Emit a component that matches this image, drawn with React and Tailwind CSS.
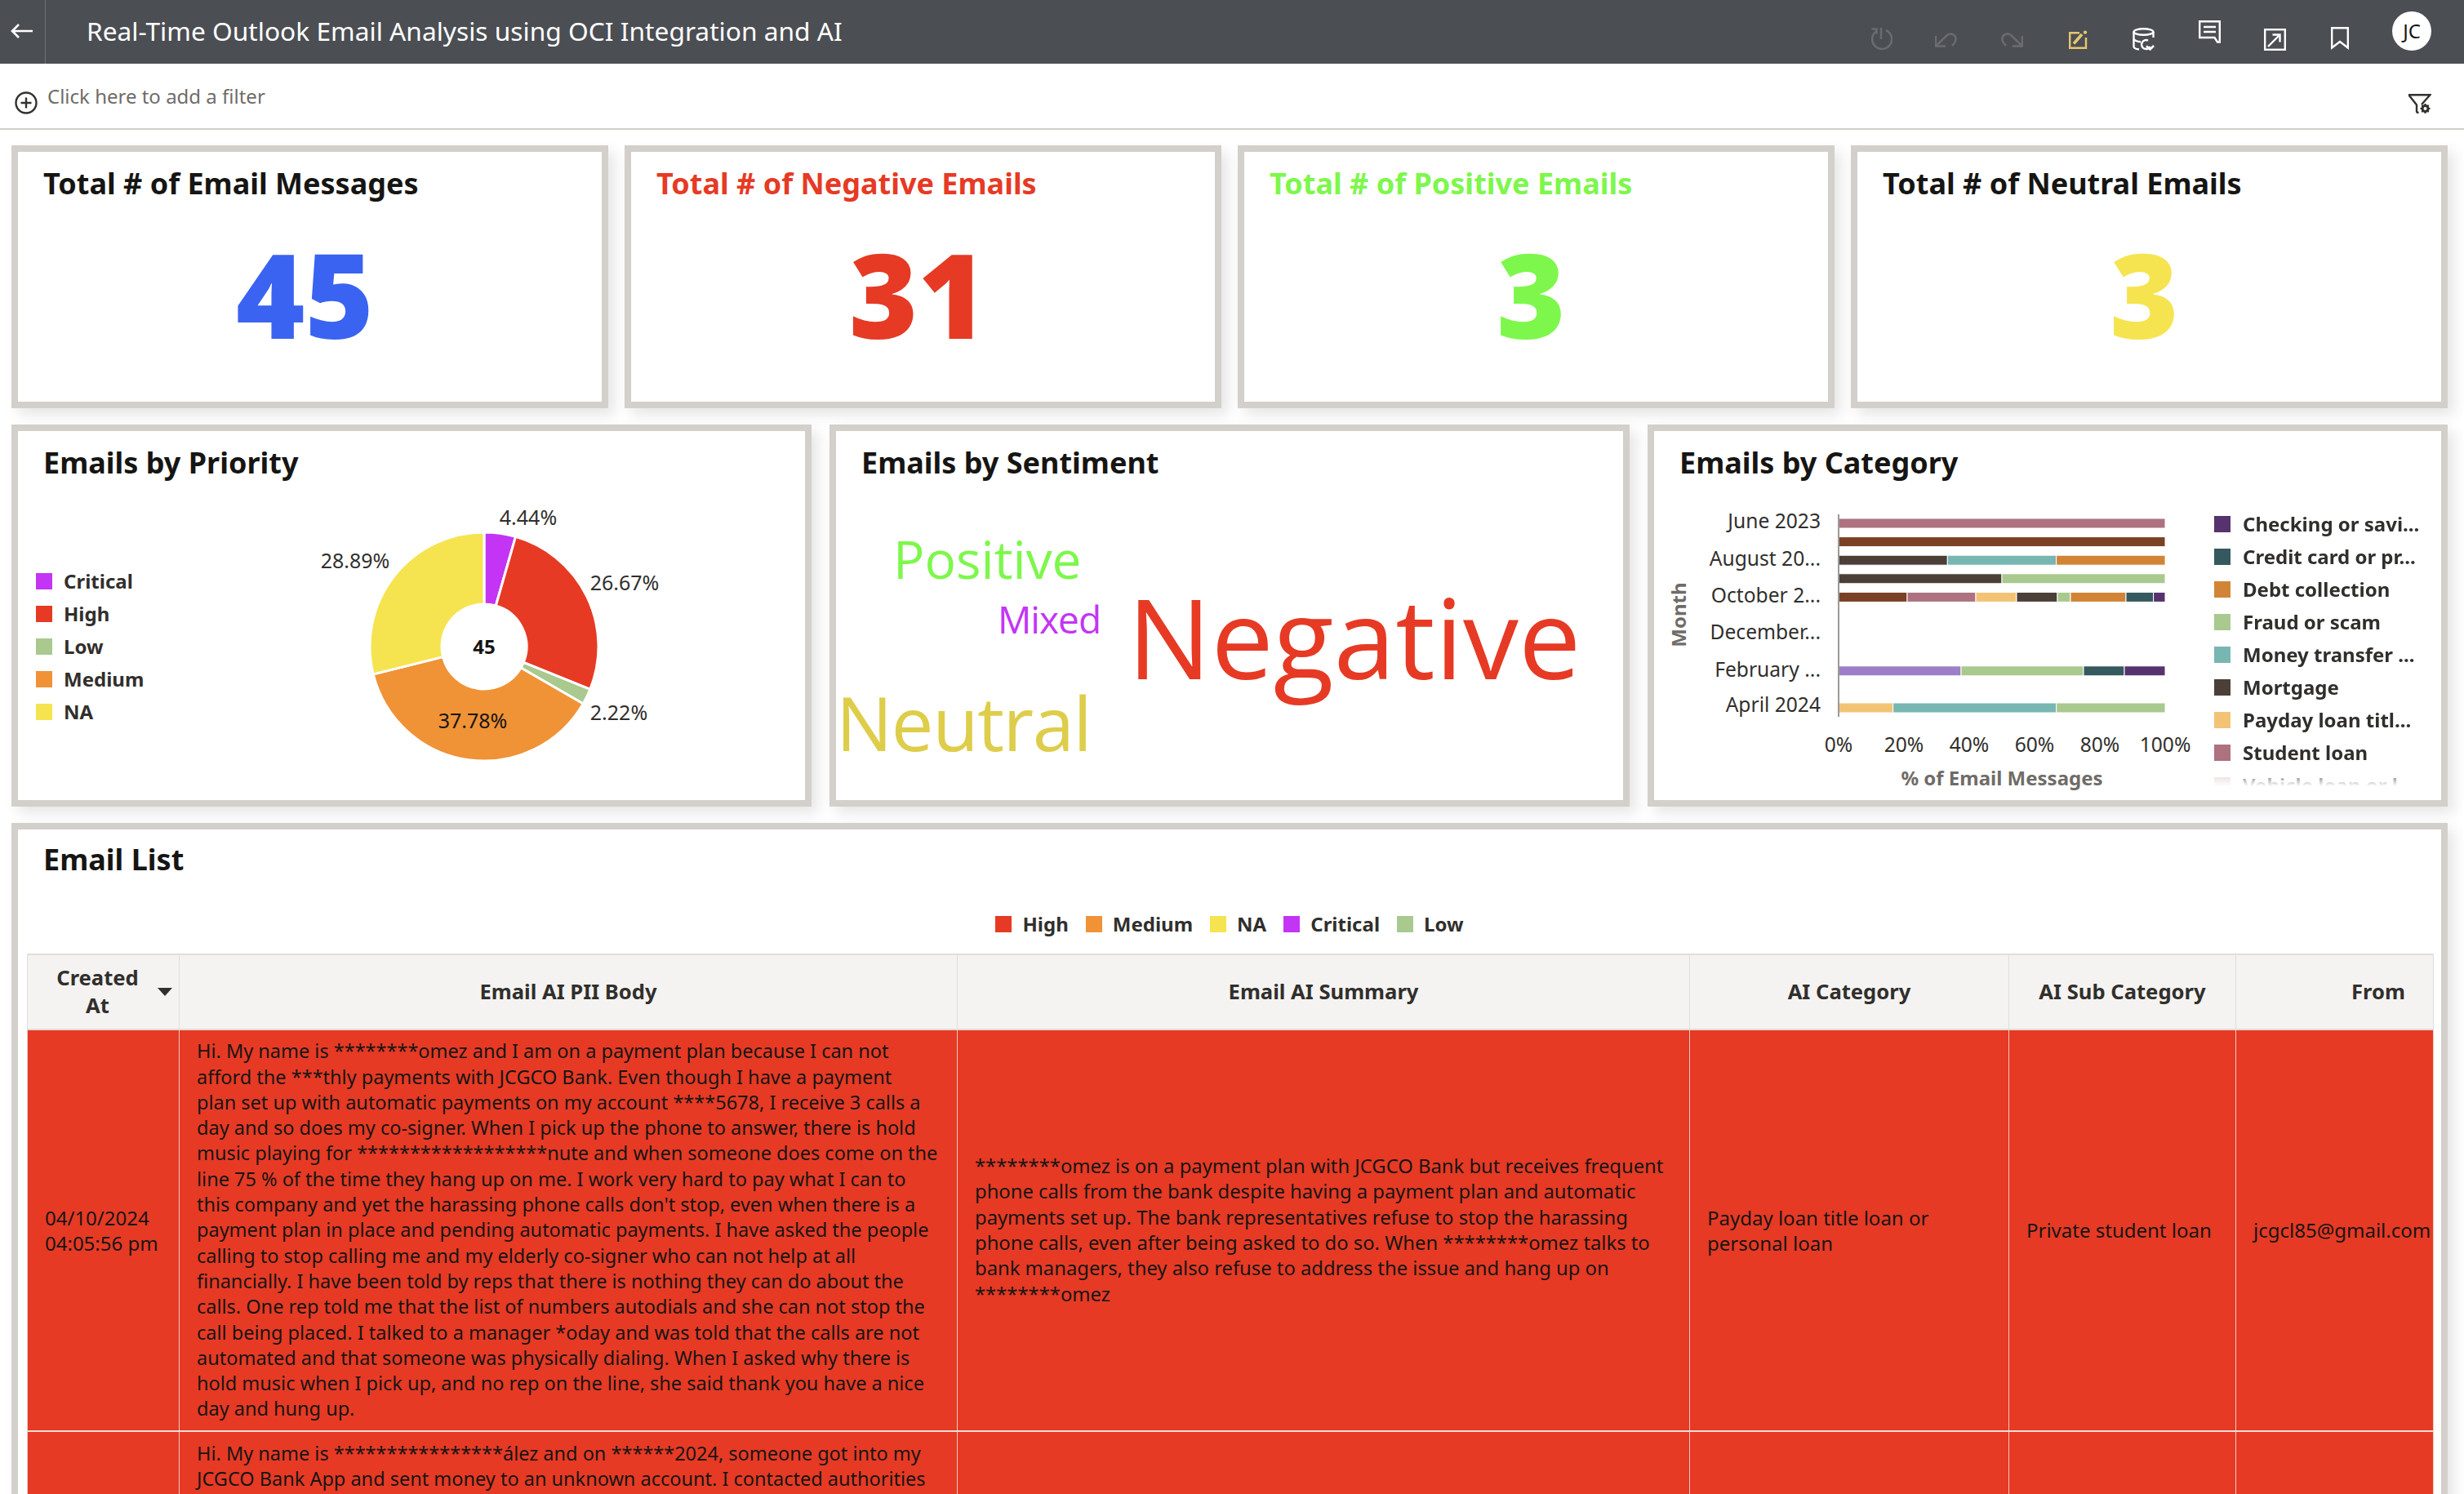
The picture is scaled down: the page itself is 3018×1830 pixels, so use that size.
import React from 'react';

const bodyLines = [
    "Hi. My name is ********omez and I am on a payment plan because I can not",
    "afford the ***thly payments with JCGCO Bank. Even though I have a payment",
    "plan set up with automatic payments on my account ****5678, I receive 3 calls a",
    "day and so does my co-signer. When I pick up the phone to answer, there is hold",
    "music playing for ******************nute and when someone does come on the",
    "line 75 % of the time they hang up on me. I work very hard to pay what I can to",
    "this company and yet the harassing phone calls don't stop, even when there is a",
    "payment plan in place and pending automatic payments. I have asked the people",
    "calling to stop calling me and my elderly co-signer who can not help at all",
    "financially. I have been told by reps that there is nothing they can do about the",
    "calls. One rep told me that the list of numbers autodials and she can not stop the",
    "call being placed. I talked to a manager *oday and was told that the calls are not",
    "automated and that someone was physically dialing. When I asked why there is",
    "hold music when I pick up, and no rep on the line, she said thank you have a nice",
    "day and hung up.",
];

const summaryLines = [
    "********omez is on a payment plan with JCGCO Bank but receives frequent",
    "phone calls from the bank despite having a payment plan and automatic",
    "payments set up. The bank representatives refuse to stop the harassing",
    "phone calls, even after being asked to do so. When ********omez talks to",
    "bank managers, they also refuse to address the issue and hang up on",
    "********omez",
];

const body2Lines = [
    "Hi. My name is ****************ález and on ******2024, someone got into my",
    "JCGCO Bank App and sent money to an unknown account. I contacted authorities",
];

const C = {
    checking: '#56336e', credit: '#35595f', debt: '#d18435', fraud: '#a9c98f', money: '#78b6b2',
    mortgage: '#4b3f37', payday: '#f3c375', student: '#ad7180', brown: '#7a4125', purple: '#9c7fc7',
};

// [row index, [[color, percent]...]]
const bars = [
    [0, [[C.student, 100]]],
    [1, [[C.brown, 100]]],
    [2, [[C.mortgage, 33.33], [C.money, 33.33], [C.debt, 33.34]]],
    [3, [[C.mortgage, 50], [C.fraud, 50]]],
    [4, [[C.brown, 21], [C.student, 21], [C.payday, 12.5], [C.mortgage, 12.5], [C.fraud, 4], [C.debt, 17], [C.credit, 8.4], [C.checking, 3.6]]],
    [8, [[C.purple, 37.5], [C.fraud, 37.5], [C.credit, 12.5], [C.checking, 12.5]]],
    [10, [[C.payday, 16.67], [C.money, 50], [C.fraud, 33.33]]],
];

const categoryLegend = [
    [C.checking, 'Checking or savi...'],
    [C.credit, 'Credit card or pr...'],
    [C.debt, 'Debt collection'],
    [C.fraud, 'Fraud or scam'],
    [C.money, 'Money transfer ...'],
    [C.mortgage, 'Mortgage'],
    [C.payday, 'Payday loan titl...'],
    [C.student, 'Student loan'],
    ['#d9c8c4', 'Vehicle loan or l'],
];

const priorityLegend = [
    ['#c334f5', 'Critical'],
    ['#e63a25', 'High'],
    ['#a9c98f', 'Low'],
    ['#f09236', 'Medium'],
    ['#f5e44f', 'NA'],
];

const slices = [
    ['#c334f5', 4.44],
    ['#e63a25', 26.67],
    ['#a9c98f', 2.22],
    ['#f09236', 37.78],
    ['#f5e44f', 28.89],
];

const slicePath = (cx, cy, r, r2, from, to) => {
    const a = (from / 100) * Math.PI * 2;
    const b = (to / 100) * Math.PI * 2;
    const pt = (rad, ang) => `${cx + rad * Math.sin(ang)} ${cy - rad * Math.cos(ang)}`;
    const large = to - from > 50 ? 1 : 0;
    return `M${pt(r2, a)} L${pt(r, a)} A${r} ${r} 0 ${large} 1 ${pt(r, b)} L${pt(r2, b)} A${r2} ${r2} 0 ${large} 0 ${pt(r2, a)}Z`;
};

const PowerIcon = () => (
    <svg width="28" height="28" viewBox="0 0 28 28" fill="none" stroke="#6a6c70" strokeWidth="2.5" className="mt-[33px]">
        <path d="M8.5 5 A12 12 0 1 0 20 4" />
        <path d="M14 1 V15" />
        <path d="M2.5 2.5 H8.5 V8.5" />
    </svg>
);

const UndoIcon = () => (
    <svg width="27" height="18" viewBox="0 0 27 18" fill="none" stroke="#6a6c70" strokeWidth="2.5" className="mt-[40px] ml-[52px]">
        <path d="M1 4 V16.5 H13" />
        <path d="M1.5 16 L15 3 C19 0 25 2 25.5 7 C26 10 23 14 21 16" />
    </svg>
);

const RedoIcon = () => (
    <svg width="27" height="18" viewBox="0 0 27 18" fill="none" stroke="#6a6c70" strokeWidth="2.5" className="mt-[40px] ml-[54px]">
        <path d="M26 4 V16.5 H14" />
        <path d="M25.5 16 L12 3 C8 0 2 2 1.5 7 C1 10 4 14 6 16" />
    </svg>
);

const EditIcon = () => (
    <svg width="23" height="23" viewBox="0 0 23 23" fill="none" stroke="#e5c56e" className="mt-[37px] ml-[56px]">
        <path d="M13 3.2 H1.2 V21.8 H21 V9" strokeWidth="2.4" />
        <path d="M6 16.5 L16 5" strokeWidth="3.6" />
        <circle cx="20" cy="2.6" r="2.2" fill="#e5c56e" stroke="none" />
    </svg>
);

const DataIcon = () => (
    <svg width="28" height="28" viewBox="0 0 28 28" fill="none" stroke="#ffffff" strokeWidth="2.4" className="mt-[34px] ml-[55px]">
        <ellipse cx="13.5" cy="5" rx="12" ry="3.8" />
        <path d="M1.5 5 V23 C1.5 25 4 26 8 26.5" />
        <path d="M25.5 5 V12" />
        <path d="M1.5 14 C3 16 6 17 10 17.2" />
        <path d="M21.5 23 A5.5 5.5 0 1 1 19 15.6" />
        <path d="M17 22.5 L21.5 26.5 L26 22" strokeWidth="2.6" />
    </svg>
);

const CommentIcon = () => (
    <svg width="27" height="28" viewBox="0 0 27 28" fill="none" stroke="#ffffff" strokeWidth="2.4" className="mt-[25px] ml-[53px]">
        <path d="M1.2 1.2 H25.8 V26.5 H23 L19.5 21 H1.2 Z" />
        <path d="M6 8 H21 M6 14 H21" />
    </svg>
);

const ShareIcon = () => (
    <svg width="27" height="27" viewBox="0 0 27 27" fill="none" stroke="#ffffff" strokeWidth="2.4" className="mt-[35px] ml-[53px]">
        <rect x="1.2" y="1.2" width="24.6" height="24.6" />
        <path d="M5 22 L19 8" />
        <path d="M10.5 7.5 H19.5 V16.5" />
    </svg>
);

const BookmarkIcon = () => (
    <svg width="22" height="28" viewBox="0 0 22 28" fill="none" stroke="#ffffff" strokeWidth="2.4" className="mt-[33px] ml-[55px]">
        <path d="M1.2 1.2 H20.8 V25.5 L11 18 L1.2 25.5 Z" />
    </svg>
);

const FilterGearIcon = () => (
    <svg width="29" height="25" viewBox="0 0 29 25" fill="none" stroke="#33312e" strokeWidth="2.4" className="mt-[37px]">
        <path d="M1 1.2 H27.5 L17 13" />
        <path d="M1.5 1.5 L11 13.5 V21 C11 22.5 12 23 13.5 23" />
        <circle cx="21.5" cy="18" r="3.5" strokeWidth="3" />
        <path d="M21.5 12 V14 M21.5 22 V24 M15.5 18 H17.5 M25.5 18 H27.5 M17.3 13.8 L18.7 15.2 M24.3 20.8 L25.7 22.2 M25.7 13.8 L24.3 15.2 M18.7 20.8 L17.3 22.2" strokeWidth="2" />
    </svg>
);

const PlusCircle = () => (
    <svg width="28" height="28" viewBox="0 0 28 28" fill="none" stroke="#33312e" className="mt-[34px] ml-[18px]">
        <circle cx="14" cy="14" r="12.5" strokeWidth="2.4" />
        <path d="M14 7.5 V20.5 M7.5 14 H20.5" strokeWidth="2.4" />
    </svg>
);

const Panel = ({ children, className = '' }) => (
    <div className={`border-8 border-[#d3cfca] bg-white shadow-[8px_8px_16px_rgba(0,0,0,0.1)] ${className}`}>
        {children}
    </div>
);

const StatCard = ({ title, value, titleColor, valueColor }) => (
    <Panel className="h-[322px] w-[731px] pl-[31px]">
        <div className={`pt-[16px] text-[36px] leading-[46px] font-bold ${titleColor}`}>{title}</div>
        <div className={`mt-[25px] pr-[43px] text-center text-[144px] leading-[172px] font-black ${valueColor}`}>{value}</div>
    </Panel>
);

const PanelTitle = ({ children }) => (
    <div className="h-[92px] pl-[31px] pt-[16px] text-[36px] leading-[46px] font-bold text-[#161513]">{children}</div>
);

const PriorityChart = () => {
    let run = 0;
    const cx = 213;
    const cy = 172;
    return (
        <svg width="440" height="340" viewBox="0 0 440 340" className="shrink-0 overflow-visible">
            {slices.map(([color, pct]) => {
                const from = run;
                run += pct;
                return <path key={color} d={slicePath(cx, cy, 140, 52, from, run)} fill={color} stroke="#ffffff" strokeWidth="3" />;
            })}
            <g className="text-[25px]" fill="#312f2c">
                <text x="267" y="23" textAnchor="middle">4.44%</text>
                <text x="55" y="76" textAnchor="middle">28.89%</text>
                <text x="385" y="103" textAnchor="middle">26.67%</text>
                <text x="378" y="262" textAnchor="middle">2.22%</text>
                <text x="199" y="272" textAnchor="middle" fill="#161513">37.78%</text>
            </g>
            <text x="213" y="181" textAnchor="middle" className="text-[24px] font-bold" fill="#161513">45</text>
        </svg>
    );
};

const WordCloud = () => (
    <svg width="964" height="340" viewBox="0 0 964 340" className="font-['Open_Sans',sans-serif]">
        <text x="70" y="89" fontSize="64" fill="#7df74b">Positive</text>
        <text x="198" y="156" fontSize="46" letterSpacing="-1" fill="#c334f5">Mixed</text>
        <text x="357" y="212" fontSize="136" fill="#e63a25">Negative</text>
        <text x="0" y="300" fontSize="92" letterSpacing="-1.4" fill="#decd4a">Neutral</text>
    </svg>
);

const CategoryChart = () => {
    const x0 = 222;
    const w = 400;
    const labels = [
        ['June 2023', 27], ['August 20...', 73], ['October 2...', 118],
        ['December...', 163], ['February ...', 209], ['April 2024', 252],
    ];
    return (
        <svg width="670" height="350" viewBox="0 0 670 350" className="shrink-0">
            {bars.map(([row, parts]) => {
                let left = 0;
                return parts.map(([color, pct], i) => {
                    const rx = x0 + (left / 100) * w;
                    left += pct;
                    return <rect key={row + '-' + i} x={rx} y={15 + row * 22.6} width={(pct / 100) * w} height="12" fill={color} stroke="#ffffff" strokeWidth="1" />;
                });
            })}
            <path d="M222 10 V258" stroke="#9c9a97" strokeWidth="2" />
            <g className="text-[24.6px]" fill="#312f2c">
                {labels.map(([t, y]) => (
                    <text key={t} x="200" y={y} textAnchor="end">{t}</text>
                ))}
                {[0, 20, 40, 60, 80, 100].map((p) => (
                    <text key={p} x={x0 + p * 4} y="301" textAnchor="middle">{p}%</text>
                ))}
            </g>
            <text x="422" y="342" textAnchor="middle" className="text-[24px] font-bold" fill="#6f6c68">% of Email Messages</text>
            <text transform="translate(35 133) rotate(-90)" textAnchor="middle" className="text-[24px] font-bold" fill="#6f6c68">Month</text>
        </svg>
    );
};

const HeadCell = ({ children, className = '' }) => (
    <th className={`border-x border-[#dfdedb] bg-[#f4f3f1] align-middle text-[25.6px] leading-[34px] font-bold text-[#312f2c] ${className}`}>{children}</th>
);

const BodyCell = ({ children, className = '' }) => (
    <td className={`border-x border-[#f3c9c2] align-middle leading-[31.3px] whitespace-nowrap overflow-hidden text-[#161513] ${className}`}>{children}</td>
);

const Lines = ({ lines }) => lines.map((l) => <div key={l}>{l}</div>);

const App = () => {
    return (
        <div className="h-[1830px] w-[3018px] overflow-hidden bg-white font-['Noto_Sans',sans-serif] text-[#161513]">
            {/* top bar */}
            <div className="flex h-[78px] bg-[#4b4e53] text-white">
                <div className="flex w-[56px] shrink-0 items-center justify-center border-r border-[#6f7276]">
                    <svg width="28" height="20" viewBox="0 0 28 20" fill="none" stroke="#ffffff" strokeWidth="2.6" className="mb-[2px] mr-[2px]">
                        <path d="M27 10 H2 M10 2 L2 10 L10 18" />
                    </svg>
                </div>
                <div className="ml-[50px] pt-[18px] text-[31.7px] leading-[40px]">Real-Time Outlook Email Analysis using OCI Integration and AI</div>
                <div className="ml-auto mr-[40px] flex items-start">
                    <PowerIcon />
                    <UndoIcon />
                    <RedoIcon />
                    <EditIcon />
                    <DataIcon />
                    <CommentIcon />
                    <ShareIcon />
                    <BookmarkIcon />
                    <div className="mt-[14px] ml-[53px] flex h-[48px] w-[48px] items-center justify-center rounded-full bg-white text-[24px] text-[#161513]">JC</div>
                </div>
            </div>

            {/* filter bar */}
            <div className="flex h-[81px] items-start border-b-2 border-[#d3cfca]">
                <PlusCircle />
                <div className="ml-[12px] pt-[25px] text-[24px] leading-[30px] text-[#6f6c68]">Click here to add a filter</div>
                <div className="ml-auto mr-[40px]">
                    <FilterGearIcon />
                </div>
            </div>

            <div className="flex flex-col gap-[20px] pl-[14px] pr-[20px] pt-[19px]">
                <div className="flex justify-between">
                    <StatCard title="Total # of Email Messages" value="45" titleColor="text-[#161513]" valueColor="text-[#3a63f2]" />
                    <StatCard title="Total # of Negative Emails" value="31" titleColor="text-[#e63a25]" valueColor="text-[#e63a25]" />
                    <StatCard title="Total # of Positive Emails" value="3" titleColor="text-[#7df74b]" valueColor="text-[#7df74b]" />
                    <StatCard title="Total # of Neutral Emails" value="3" titleColor="text-[#161513]" valueColor="text-[#f5e44f]" />
                </div>

                <div className="flex justify-between">
                    <Panel className="h-[468px] w-[980px]">
                        <PanelTitle>Emails by Priority</PanelTitle>
                        <div className="flex">
                            <div className="mt-[82px] flex w-[358px] shrink-0 flex-col gap-[20px] pl-[22px]">
                                {priorityLegend.map(([color, label]) => (
                                    <div key={label} className="flex h-[20px] items-center gap-[14px] text-[24px] font-bold text-[#312f2c]">
                                        <span className="h-[20px] w-[20px]" style={{ backgroundColor: color }} />
                                        {label}
                                    </div>
                                ))}
                            </div>
                            <PriorityChart />
                        </div>
                    </Panel>

                    <Panel className="h-[468px] w-[980px]">
                        <PanelTitle>Emails by Sentiment</PanelTitle>
                        <WordCloud />
                    </Panel>

                    <Panel className="h-[468px] w-[980px]">
                        <PanelTitle>Emails by Category</PanelTitle>
                        <div className="flex pl-[4px]">
                            <CategoryChart />
                            <div className="ml-[12px] flex h-[343px] flex-col gap-[20px] overflow-hidden pt-[12px] whitespace-nowrap [mask-image:linear-gradient(to_bottom,black_320px,transparent_343px)]">
                                {categoryLegend.map(([color, label]) => (
                                    <div key={label} className="flex h-[20px] shrink-0 items-center gap-[15px] text-[24px] font-bold text-[#312f2c]">
                                        <span className="h-[20px] w-[20px]" style={{ backgroundColor: color }} />
                                        {label}
                                    </div>
                                ))}
                            </div>
                        </div>
                    </Panel>
                </div>

                <Panel className="h-[900px]">
                    <div className="pl-[31px] pt-[14px] text-[36px] leading-[46px] font-bold text-[#161513]">Email List</div>
                    <div className="mt-[46px] flex justify-center text-[24px] font-bold text-[#312f2c]">
                        {[['#e63a25', 'High'], ['#f09236', 'Medium'], ['#f5e44f', 'NA'], ['#c334f5', 'Critical'], ['#a9c98f', 'Low']].map(([color, label]) => (
                            <div key={label} className="mr-[21px] flex h-[20px] items-center gap-[13px] last:mr-0">
                                <span className="h-[20px] w-[20px]" style={{ backgroundColor: color }} />
                                {label}
                            </div>
                        ))}
                    </div>
                    <div className="mt-[26px] ml-[11px]">
                        <table className="w-[2947px] table-fixed border-collapse">
                            <colgroup>
                                <col className="w-[186px]" />
                                <col className="w-[953px]" />
                                <col className="w-[897px]" />
                                <col className="w-[391px]" />
                                <col className="w-[278px]" />
                                <col className="w-[242px]" />
                            </colgroup>
                            <thead>
                                <tr className="h-[92px] border-y-2 border-[#dfdedb]">
                                    <HeadCell className="relative pr-[14px]">
                                        Created<br />At
                                        <span className="absolute top-[40px] right-[8px] h-0 w-0 border-x-[9px] border-t-[10px] border-x-transparent border-t-[#312f2c]" />
                                    </HeadCell>
                                    <HeadCell>Email AI PII Body</HeadCell>
                                    <HeadCell>Email AI Summary</HeadCell>
                                    <HeadCell>AI Category</HeadCell>
                                    <HeadCell>AI Sub Category</HeadCell>
                                    <HeadCell className="pr-[34px] text-right">From</HeadCell>
                                </tr>
                            </thead>
                            <tbody className="bg-[#e63a25]">
                                <tr className="h-[492px] border-b-2 border-[#f0dcd8]">
                                    <BodyCell className="pl-[21px] text-[24px]"><Lines lines={['04/10/2024', '04:05:56 pm']} /></BodyCell>
                                    <BodyCell className="pl-[21px] text-[23.5px]"><Lines lines={bodyLines} /></BodyCell>
                                    <BodyCell className="pl-[21px] text-[23.8px]"><Lines lines={summaryLines} /></BodyCell>
                                    <BodyCell className="pl-[21px] text-[24px]"><Lines lines={['Payday loan title loan or', 'personal loan']} /></BodyCell>
                                    <BodyCell className="pl-[21px] text-[24px]"><Lines lines={['Private student loan']} /></BodyCell>
                                    <BodyCell className="pl-[21px] text-[24px]"><Lines lines={['jcgcl85@gmail.com']} /></BodyCell>
                                </tr>
                                <tr className="h-[90px]">
                                    <BodyCell />
                                    <BodyCell className="pl-[21px] pt-[11px] align-top text-[23.5px]"><Lines lines={body2Lines} /></BodyCell>
                                    <BodyCell />
                                    <BodyCell />
                                    <BodyCell />
                                    <BodyCell />
                                </tr>
                            </tbody>
                        </table>
                    </div>
                </Panel>
            </div>
        </div>
    );
};

export default App;
